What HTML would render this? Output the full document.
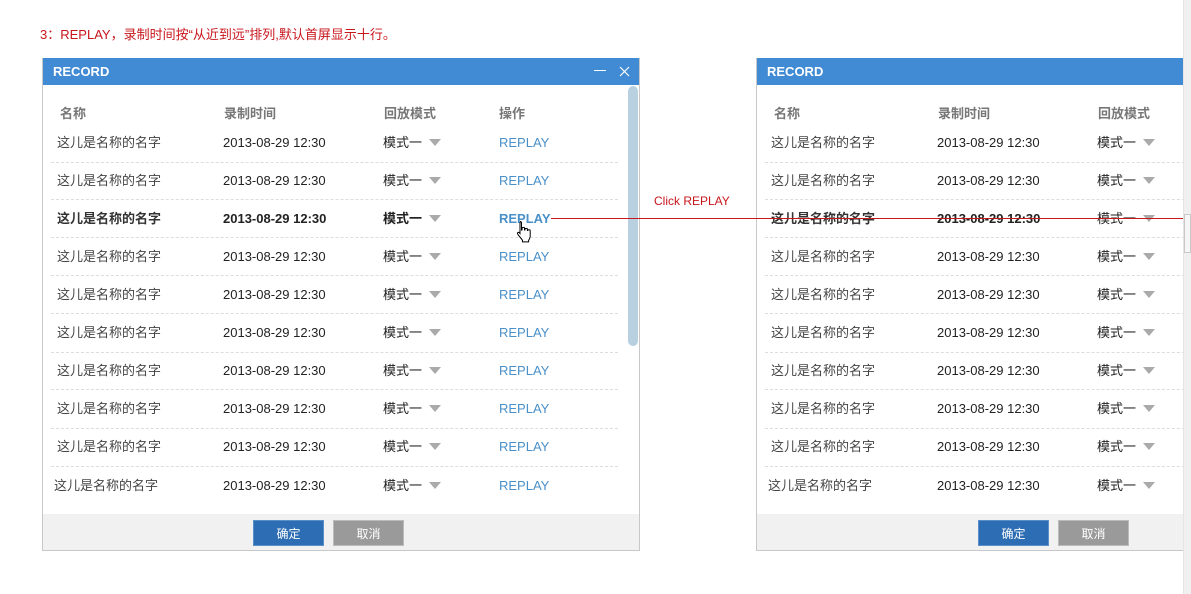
<!DOCTYPE html>
<html><head><meta charset="utf-8"><style>
*{margin:0;padding:0;box-sizing:border-box}
body{width:1191px;height:594px;background:#fff;position:relative;overflow:hidden;font-family:"Liberation Sans","Noto Sans CJK SC",sans-serif;}
.abs{position:absolute;white-space:nowrap}
.title{left:40px;top:24px;font-size:13px;color:#c8161d}
.dlg{position:absolute;top:58px;height:493px;border:1px solid #c8c8c8;border-top:none;background:#fff;overflow:hidden}
.hd{position:absolute;left:0;top:0;right:0;height:27px;background:#418ad4;color:#fff;font-weight:bold;font-size:13px;line-height:27px;padding-left:10px}
.th{position:absolute;top:45px;font-size:13px;font-weight:bold;color:#777}
.row{position:absolute;height:38px;font-size:13px;color:#222}
.row span{position:absolute;top:11px;line-height:16px}
.row .n{color:#444}
.row .m{color:#222}
.row .r{color:#4a90c9}
.row .tri{width:0;height:0;border-left:6px solid transparent;border-right:6px solid transparent;border-top:7px solid #aaa;top:15px}
.row.b{font-weight:bold}
.row.b .n{color:#333}
.sep{position:absolute;height:0;border-top:1px dashed #ddd}
.ft{position:absolute;left:0;right:0;top:456px;height:37px;background:#f1f1f1}
.btn{position:absolute;top:6px;width:71px;height:26px;color:#fff;font-size:12px;text-align:center;line-height:26px}
.ok{background:#2c6db3;border:1px solid #5b8fc8}
.cc{background:#9a9a9a;border:1px solid #bbb}
</style></head><body>
<div class="abs title">3：REPLAY，录制时间按“从近到远”排列,默认首屏显示十行。</div>

<!-- left dialog -->
<div class="dlg" style="left:42px;width:598px;">
  <div class="hd">RECORD</div>
  <div class="abs" style="left:551px;top:12px;width:12px;height:1px;background:#fff"></div>
  <svg class="abs" style="left:576px;top:8px" width="11" height="11" viewBox="0 0 11 11"><path d="M1 1L10 10M10 1L1 10" stroke="#fff" stroke-width="1.2"/></svg>
  <div class="abs" style="left:585px;top:28px;width:10px;height:260px;background:#b8d0e0;border-radius:5px"></div>
  <div class="th" style="left:17px">名称</div>
  <div class="th" style="left:181px">录制时间</div>
  <div class="th" style="left:341px">回放模式</div>
  <div class="th" style="left:456px">操作</div>

  <div class="row" style="top:66px;left:0;width:580px"><span class="n" style="left:14px">这儿是名称的名字</span><span style="left:180px">2013-08-29 12:30</span><span class="m" style="left:340px">模式一</span><span class="tri" style="left:386px"></span><span class="r" style="left:456px">REPLAY</span></div>
  <div class="sep" style="left:8px;width:567px;top:104px"></div>
  <div class="row" style="top:104px;left:0;width:580px"><span class="n" style="left:14px">这儿是名称的名字</span><span style="left:180px">2013-08-29 12:30</span><span class="m" style="left:340px">模式一</span><span class="tri" style="left:386px"></span><span class="r" style="left:456px">REPLAY</span></div>
  <div class="sep" style="left:8px;width:567px;top:141px"></div>
  <div class="row b" style="top:142px;left:0;width:580px"><span class="n" style="left:14px">这儿是名称的名字</span><span style="left:180px">2013-08-29 12:30</span><span class="m" style="left:340px">模式一</span><span class="tri" style="left:386px"></span><span class="r" style="left:456px">REPLAY</span></div>
  <div class="sep" style="left:8px;width:567px;top:179px"></div>
  <div class="row" style="top:180px;left:0;width:580px"><span class="n" style="left:14px">这儿是名称的名字</span><span style="left:180px">2013-08-29 12:30</span><span class="m" style="left:340px">模式一</span><span class="tri" style="left:386px"></span><span class="r" style="left:456px">REPLAY</span></div>
  <div class="sep" style="left:8px;width:567px;top:217px"></div>
  <div class="row" style="top:218px;left:0;width:580px"><span class="n" style="left:14px">这儿是名称的名字</span><span style="left:180px">2013-08-29 12:30</span><span class="m" style="left:340px">模式一</span><span class="tri" style="left:386px"></span><span class="r" style="left:456px">REPLAY</span></div>
  <div class="sep" style="left:8px;width:567px;top:255px"></div>
  <div class="row" style="top:256px;left:0;width:580px"><span class="n" style="left:14px">这儿是名称的名字</span><span style="left:180px">2013-08-29 12:30</span><span class="m" style="left:340px">模式一</span><span class="tri" style="left:386px"></span><span class="r" style="left:456px">REPLAY</span></div>
  <div class="sep" style="left:8px;width:567px;top:294px"></div>
  <div class="row" style="top:294px;left:0;width:580px"><span class="n" style="left:14px">这儿是名称的名字</span><span style="left:180px">2013-08-29 12:30</span><span class="m" style="left:340px">模式一</span><span class="tri" style="left:386px"></span><span class="r" style="left:456px">REPLAY</span></div>
  <div class="sep" style="left:8px;width:567px;top:331px"></div>
  <div class="row" style="top:332px;left:0;width:580px"><span class="n" style="left:14px">这儿是名称的名字</span><span style="left:180px">2013-08-29 12:30</span><span class="m" style="left:340px">模式一</span><span class="tri" style="left:386px"></span><span class="r" style="left:456px">REPLAY</span></div>
  <div class="sep" style="left:8px;width:567px;top:370px"></div>
  <div class="row" style="top:370px;left:0;width:580px"><span class="n" style="left:14px">这儿是名称的名字</span><span style="left:180px">2013-08-29 12:30</span><span class="m" style="left:340px">模式一</span><span class="tri" style="left:386px"></span><span class="r" style="left:456px">REPLAY</span></div>
  <div class="sep" style="left:8px;width:567px;top:408px"></div>
  <div class="row" style="top:409px;left:0;width:580px"><span class="n" style="left:11px">这儿是名称的名字</span><span style="left:180px">2013-08-29 12:30</span><span class="m" style="left:340px">模式一</span><span class="tri" style="left:386px"></span><span class="r" style="left:456px">REPLAY</span></div>

  <div class="ft"><div class="btn ok" style="left:210px">确定</div><div class="btn cc" style="left:290px">取消</div></div>
</div>

<!-- red line & label -->
<div class="abs" style="left:551px;top:218px;width:633px;height:1px;background:#c8161d;z-index:5"></div>
<div class="abs" style="left:654px;top:194px;font-size:12px;color:#c8161d">Click REPLAY</div>
<svg class="abs" style="left:516px;top:220px;z-index:6" width="20" height="24" viewBox="0 0 20 24"><path d="M4 1.5c1 0 1.5.6 1.5 1.5v7l.6-.2V8c0-.9 2.4-.9 2.4 0v2l.5-.1V9c0-.9 2.4-.9 2.4 0v1.5l.5-.1c0-.9 2.3-.9 2.3.2v5.5c0 1.5-.8 3-1.6 4.3v1.5H6.5v-1.5C5 17.6 2 15.5 1.5 13.5c-.3-1 1-1.6 1.8-.8L4 13.5V3c0-1 .5-1.5 0-1.5z" fill="#fff" stroke="#000" stroke-width="1"/></svg>

<!-- right dialog -->
<div class="dlg" style="left:756px;width:440px;">
  <div class="hd">RECORD</div>
  <div class="th" style="left:17px">名称</div>
  <div class="th" style="left:181px">录制时间</div>
  <div class="th" style="left:341px">回放模式</div>

  <div class="row" style="top:66px;left:0;width:440px"><span class="n" style="left:14px">这儿是名称的名字</span><span style="left:180px">2013-08-29 12:30</span><span class="m" style="left:340px">模式一</span><span class="tri" style="left:386px"></span></div>
  <div class="sep" style="left:8px;width:440px;top:104px"></div>
  <div class="row" style="top:104px;left:0;width:440px"><span class="n" style="left:14px">这儿是名称的名字</span><span style="left:180px">2013-08-29 12:30</span><span class="m" style="left:340px">模式一</span><span class="tri" style="left:386px"></span></div>
  <div class="sep" style="left:8px;width:440px;top:141px"></div>
  <div class="row b" style="top:142px;left:0;width:440px"><span class="n" style="left:14px">这儿是名称的名字</span><span style="left:180px">2013-08-29 12:30</span><span class="m" style="left:340px;font-weight:normal">模式一</span><span class="tri" style="left:386px"></span></div>
  <div class="sep" style="left:8px;width:440px;top:179px"></div>
  <div class="row" style="top:180px;left:0;width:440px"><span class="n" style="left:14px">这儿是名称的名字</span><span style="left:180px">2013-08-29 12:30</span><span class="m" style="left:340px">模式一</span><span class="tri" style="left:386px"></span></div>
  <div class="sep" style="left:8px;width:440px;top:217px"></div>
  <div class="row" style="top:218px;left:0;width:440px"><span class="n" style="left:14px">这儿是名称的名字</span><span style="left:180px">2013-08-29 12:30</span><span class="m" style="left:340px">模式一</span><span class="tri" style="left:386px"></span></div>
  <div class="sep" style="left:8px;width:440px;top:255px"></div>
  <div class="row" style="top:256px;left:0;width:440px"><span class="n" style="left:14px">这儿是名称的名字</span><span style="left:180px">2013-08-29 12:30</span><span class="m" style="left:340px">模式一</span><span class="tri" style="left:386px"></span></div>
  <div class="sep" style="left:8px;width:440px;top:294px"></div>
  <div class="row" style="top:294px;left:0;width:440px"><span class="n" style="left:14px">这儿是名称的名字</span><span style="left:180px">2013-08-29 12:30</span><span class="m" style="left:340px">模式一</span><span class="tri" style="left:386px"></span></div>
  <div class="sep" style="left:8px;width:440px;top:331px"></div>
  <div class="row" style="top:332px;left:0;width:440px"><span class="n" style="left:14px">这儿是名称的名字</span><span style="left:180px">2013-08-29 12:30</span><span class="m" style="left:340px">模式一</span><span class="tri" style="left:386px"></span></div>
  <div class="sep" style="left:8px;width:440px;top:370px"></div>
  <div class="row" style="top:370px;left:0;width:440px"><span class="n" style="left:14px">这儿是名称的名字</span><span style="left:180px">2013-08-29 12:30</span><span class="m" style="left:340px">模式一</span><span class="tri" style="left:386px"></span></div>
  <div class="sep" style="left:8px;width:440px;top:408px"></div>
  <div class="row" style="top:409px;left:0;width:440px"><span class="n" style="left:11px">这儿是名称的名字</span><span style="left:180px">2013-08-29 12:30</span><span class="m" style="left:340px">模式一</span><span class="tri" style="left:386px"></span></div>

  <div class="ft"><div class="btn ok" style="left:221px">确定</div><div class="btn cc" style="left:301px">取消</div></div>
</div>

<!-- page scrollbar strip -->
<div class="abs" style="left:1183px;top:0;width:8px;height:594px;background:#f0f0f0;border-left:1px solid #e4e4e4;z-index:7"></div>
<div class="abs" style="left:1184px;top:214px;width:7px;height:39px;background:#f6f6f6;border:1px solid #c8c8c8;z-index:8"></div>
</body></html>
